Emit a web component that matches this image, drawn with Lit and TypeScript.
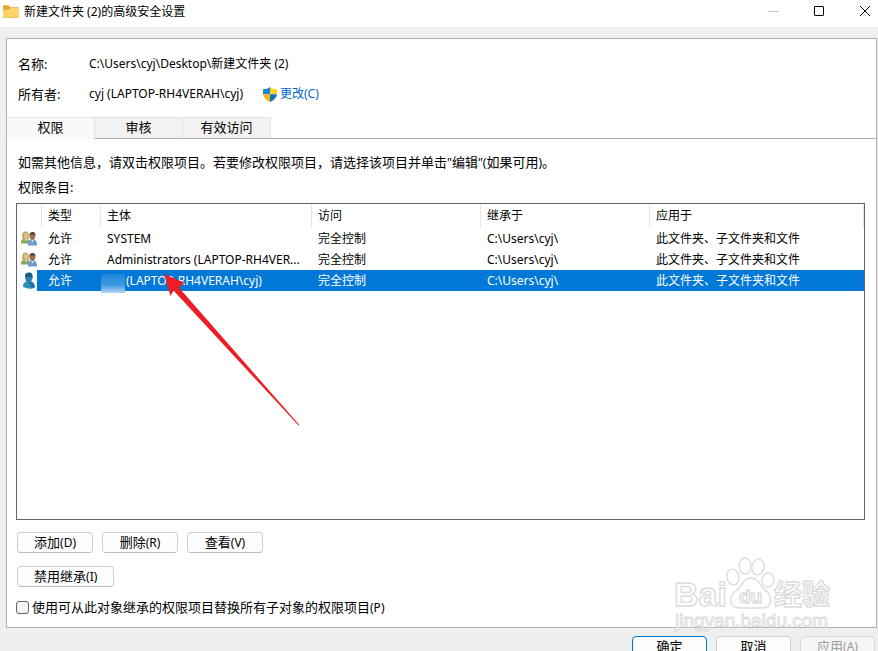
import { LitElement, html, css, svg } from "lit";
import { customElement, state } from "lit/decorators.js";
import { classMap } from "lit/directives/class-map.js";

interface Entry {
  kind: "group" | "user";
  type: string;
  principal: string;
  masked?: boolean;
  access: string;
  inherited: string;
  applies: string;
}

const SCOPE = "此文件夹、子文件夹和文件";
const ENTRIES: Entry[] = [
  { kind: "group", type: "允许", principal: "SYSTEM", access: "完全控制", inherited: "C:\\Users\\cyj\\", applies: SCOPE },
  { kind: "group", type: "允许", principal: "Administrators (LAPTOP-RH4VER...", access: "完全控制", inherited: "C:\\Users\\cyj\\", applies: SCOPE },
  { kind: "user", type: "允许", principal: "(LAPTOP-RH4VERAH\\cyj)", masked: true, access: "完全控制", inherited: "C:\\Users\\cyj\\", applies: SCOPE },
];

const folderIcon = html`<svg width="16" height="14" viewBox="0 0 16 14" aria-hidden="true">
  <path d="M0 1.5Q0 .3 1.2.3H5.4L7.3 2.2H14.6Q16 2.2 16 3.6V11H0Z" fill="#e6a42a"/>
  <path d="M0 4.4H5.6L7.4 3H14.8Q16 3 16 4.2V11.8Q16 13 14.8 13H1.2Q0 13 0 11.8Z" fill="#ffd369"/>
  <path d="M0 11.2V11.8Q0 13 1.2 13H14.8Q16 13 16 11.8V11.2Q16 12.2 14.8 12.2H1.2Q0 12.2 0 11.2Z" fill="#eebb4b"/>
</svg>`;

const shieldIcon = html`<svg width="14" height="15" viewBox="0 0 14 15" aria-hidden="true">
  <path d="M7 0C5 1.7 2.8 2.2 0 2.2V7.3H7Z" fill="#1e86d8"/>
  <path d="M7 0C9 1.7 11.2 2.2 14 2.2V7.3H7Z" fill="#ffd21f"/>
  <path d="M0 7.3H7V15C3 13.2.4 10.6 0 7.3Z" fill="#f7b416"/>
  <path d="M14 7.3H7V15C11 13.2 13.6 10.6 14 7.3Z" fill="#1672bd"/>
</svg>`;

const groupIcon = html`<svg width="16" height="15" viewBox="0 0 16 15" aria-hidden="true">
  <path d="M0 12.6C0 9 1.2 7.6 4.5 7.6S8.6 9 8.8 12.6Z" fill="#86a858"/>
  <path d="M3.6 7.6L5 10.4 6.4 7.4Z" fill="#e9efd9"/>
  <path d="M1.2 7.6C.8 3 1.6.5 4.8.5 7.6.5 8.2 3 7.8 7.4L6 8Z" fill="#bfa468"/>
  <ellipse cx="5" cy="4.6" rx="2" ry="2.9" fill="#e3bd8e"/>
  <path d="M6.8 14.4C6.8 10.4 8 8.6 11.4 8.6S16 10.4 16 14.4Z" fill="#6f9bd1"/>
  <path d="M10 8.6L11.4 11.4 12.9 8.6Z" fill="#dbe8f7"/>
  <ellipse cx="11.4" cy="5.2" rx="2.8" ry="3.8" fill="#a06f48"/>
  <path d="M8.4 5C8.2 2 9.4.9 11.6.9S14.8 2.4 14.4 5.2L13.6 3.4 9.8 3.2Z" fill="#4c4039"/>
</svg>`;

const userIcon = html`<svg width="16" height="18" viewBox="0 0 16 18" aria-hidden="true">
  <path d="M2 14.6C2 10.8 4 9.6 7.6 9.4 11.4 9.4 13.6 11 13.8 15.4 10.4 17.6 5 17 2 14.6Z" fill="#2a8fb8"/>
  <path d="M7 9.6L11 15.8 13.8 15.4C13.6 11.2 11.4 9.4 8.4 9.2Z" fill="#1d6f9b"/>
  <ellipse cx="7.8" cy="5.8" rx="3.7" ry="4.8" fill="#2c83ad"/>
  <path d="M4 5C3.8 2 5.2.6 8 .6S12.2 2.4 11.4 6.4C10.4 3.6 7.4 5 4 5Z" fill="#185d89"/>
</svg>`;

const paw = svg`
  <ellipse cx="59" cy="20" rx="6" ry="8" transform="rotate(-10 59 20)"/>
  <ellipse cx="71" cy="9" rx="6" ry="8"/>
  <ellipse cx="84" cy="10" rx="6" ry="8" transform="rotate(12 84 10)"/>
  <ellipse cx="94" cy="23" rx="6" ry="7" transform="rotate(14 94 23)"/>
  <path d="M77 21C69 21 69 28 63 33 54 39 55 51 66 51 71 51 83 51 88 51 99 51 99 39 91 33 85 28 85 21 77 21Z"/>`;

@customElement("app-root")
export class AppRoot extends LitElement {
  @state() private tab = 0;
  @state() private selected = 2;

  static styles = css`
    :host {
      display: block;
      height: 100vh;
      overflow: hidden;
      background: #efefef;
      color: #000;
      font: 12px/16px "Noto Sans", "Noto Sans CJK SC", sans-serif;
    }
    * { box-sizing: border-box; }
    button, input { font: inherit; color: inherit; margin: 0; }
    svg { display: block; flex: none; }
    .titlebar {
      display: flex;
      align-items: center;
      height: 27px;
      padding: 0 0 4px 3px;
      background: #fff;
    }
    .title { flex: 1; margin: 0 0 0 5px; font: inherit; }
    .winbtns { display: flex; align-self: flex-start; margin-right: -10px; }
    .winbtn {
      display: grid;
      place-items: center;
      width: 46px;
      height: 22px;
      padding: 0;
      border: 0;
      background: none;
    }
    .panel {
      position: relative;
      margin: 11px 1px 0 6px;
      border: 1px solid #b0b0b0;
      background: #fff;
    }
    .facts {
      display: grid;
      grid-template-columns: 71px 1fr;
      row-gap: 14px;
      margin: 0;
      padding: 17px 11px 15px;
    }
    .facts dt, .facts dd { margin: 0; }
    .facts dt { font-size: 13px; }
    .owner { display: flex; gap: 20px; }
    .change { display: flex; gap: 3px; align-items: center; color: #0066cc; text-decoration: none; }
    .tabs { display: flex; height: 22px; border-bottom: 1px solid #b0b0b0; }
    .tab {
      width: 88px;
      height: 21px;
      padding: 0 0 2px;
      border: 1px solid #e3e3e3;
      border-left-width: 0;
      border-bottom: 0;
      background: #f2f2f2;
      font-size: 13px;
      line-height: 16px;
    }
    .tab.on { height: 22px; padding-bottom: 4px; background: #f9f9f9; }
    .body { padding: 15px 11px 10px 9px; }
    .hint { margin: 0 0 8px 2px; font-size: 13px; line-height: 16px; }
    .latin { font-size: 12px; }
    .list {
      position: relative;
      min-height: 317px;
      border: 1px solid #646464;
    }
    .table { width: 100%; table-layout: fixed; border-collapse: separate; border-spacing: 0; }
    .c-icon { width: 25px; }
    .c-type { width: 59px; }
    .c-name { width: 211px; }
    .c-mid { width: 169px; }
    th {
      height: 24px;
      padding: 0 6px;
      border-right: 1px solid #e5e5e5;
      font-weight: normal;
      text-align: left;
    }
    td {
      position: relative;
      height: 21px;
      padding: 0 5px 0 6px;
      white-space: nowrap;
      overflow: hidden;
      text-overflow: ellipsis;
    }
    td.icon { padding: 0 0 0 4px; overflow: visible; }
    .sel td { background: #0078d7; color: #fff; }
    .sel td.icon { background: linear-gradient(to right, #fff 20px, #0078d7 20px); }
    td.masked { padding-left: 25px; overflow: visible; }
    .mask {
      position: absolute;
      left: 0;
      top: 4px;
      width: 24px;
      height: 19px;
      background: linear-gradient(#1c84da, #3f9ae2 60%, #8cc0ee 85%, #b9daf6);
    }
    .arrow { position: absolute; left: 147px; top: 70px; pointer-events: none; }
    .row { display: flex; gap: 9px; margin: 12px 0 0 1px; }
    .row + .row { margin-top: 13px; }
    .btn {
      min-width: 76px;
      height: 21px;
      padding: 0 16px;
      border: 1px solid #d0d0d0;
      border-bottom-color: #bcbcbc;
      border-radius: 4px;
      background: #fdfdfd;
      font-size: 13px;
      line-height: 17px;
      white-space: nowrap;
    }
    .check { display: flex; align-items: center; gap: 3px; margin-top: 11px; font-size: 13px; line-height: 18px; }
    .box {
      appearance: none;
      width: 13px;
      height: 13px;
      border: 1px solid #626262;
      border-radius: 3px;
      background: #f5f5f5;
    }
    .box:checked { background: #0067c0; }
    .footer { display: flex; justify-content: flex-end; gap: 9px; padding: 8px 3px; }
    .footer .btn { width: 75px; min-width: 0; padding: 0; }
    .footer .ok { border-color: #0078d4; }
    .footer .btn:disabled { color: #9d9d9d; border-color: #dcdcdc; background: #f5f5f5; }
    .mark {
      position: absolute;
      right: 40px;
      bottom: -6px;
      pointer-events: none;
      fill: #fff;
      stroke: #dcdcdc;
      stroke-width: 1.4px;
      font-family: "Liberation Sans", "Noto Sans CJK SC", sans-serif;
    }
    .m-big { font-size: 34px; font-weight: bold; }
    .m-du { font-size: 19px; font-weight: bold; }
    .m-cjk { font-size: 28px; font-weight: bold; }
    .m-url { font-size: 19px; stroke-width: 1px; }
  `;

  private button(label: string, key: string) {
    return html`<button class="btn">${label}<span class="latin">(${key})</span></button>`;
  }

  render() {
    return html`
      <header class="titlebar">
        ${folderIcon}
        <h1 class="title">新建文件夹 (2)的高级安全设置</h1>
        <div class="winbtns">
          <button class="winbtn" aria-label="最小化" disabled>
            <svg width="10" height="10" viewBox="0 0 10 10"><path d="M0 5.5H10" stroke="#c4c4c4"/></svg>
          </button>
          <button class="winbtn" aria-label="最大化">
            <svg width="10" height="10" viewBox="0 0 10 10"><rect x=".5" y=".5" width="9" height="9" rx=".5" fill="none" stroke="#000"/></svg>
          </button>
          <button class="winbtn" aria-label="关闭">
            <svg width="10" height="10" viewBox="0 0 10 10"><path d="M0 0L10 10M10 0L0 10" stroke="#000"/></svg>
          </button>
        </div>
      </header>
      <main class="panel">
        <dl class="facts">
          <dt>名称:</dt>
          <dd>C:\\Users\\cyj\\Desktop\\新建文件夹 (2)</dd>
          <dt>所有者:</dt>
          <dd class="owner">
            <span>cyj (LAPTOP-RH4VERAH\\cyj)</span>
            <a class="change" href="#">${shieldIcon}<span>更改(C)</span></a>
          </dd>
        </dl>
        <div class="tabs" role="tablist">
          ${["权限", "审核", "有效访问"].map(
            (name, i) => html`<button
              role="tab"
              aria-selected=${this.tab === i}
              class=${classMap({ tab: true, on: this.tab === i })}
              @click=${() => (this.tab = i)}
            >${name}</button>`
          )}
        </div>
        <div class="body">
          <p class="hint">如需其他信息，请双击权限项目。若要修改权限项目，请选择该项目并单击<span class="latin">"</span>编辑<span class="latin">"(</span>如果可用<span class="latin">)</span>。</p>
          <p class="hint">权限条目:</p>
          <div class="list">
            <table class="table">
              <colgroup>
                <col class="c-icon" /><col class="c-type" /><col class="c-name" />
                <col class="c-mid" /><col class="c-mid" /><col />
              </colgroup>
              <thead>
                <tr><th></th><th>类型</th><th>主体</th><th>访问</th><th>继承于</th><th>应用于</th></tr>
              </thead>
              <tbody>
                ${ENTRIES.map(
                  (e, i) => html`<tr class=${classMap({ sel: this.selected === i })} @click=${() => (this.selected = i)}>
                    <td class="icon">${e.kind === "group" ? groupIcon : userIcon}</td>
                    <td>${e.type}</td>
                    <td class=${classMap({ masked: !!e.masked })}>${e.masked ? html`<span class="mask"></span>` : ""}${e.principal}</td>
                    <td>${e.access}</td>
                    <td>${e.inherited}</td>
                    <td>${e.applies}</td>
                  </tr>`
                )}
              </tbody>
            </table>
            <svg class="arrow" width="138" height="154" viewBox="0 0 138 154" aria-hidden="true">
              <path d="M0 0L20.5 8.8L14.8 13.6L135.4 151L134.6 151.6L9.5 16.6L6.5 22Z" fill="#ee1c24"/>
            </svg>
          </div>
          <div class="row">
            ${this.button("添加", "D")}${this.button("删除", "R")}${this.button("查看", "V")}
          </div>
          <div class="row">${this.button("禁用继承", "I")}</div>
          <label class="check">
            <input class="box" type="checkbox" />
            <span>使用可从此对象继承的权限项目替换所有子对象的权限项目<span class="latin">(P)</span></span>
          </label>
        </div>
        <svg class="mark" width="162" height="76" viewBox="0 0 162 76" aria-hidden="true">
          <text class="m-big" x="0" y="49">Bai</text>
          ${paw}
          <text class="m-du" x="65" y="46">du</text>
          <text class="m-cjk" x="100" y="48">经验</text>
          <text class="m-url" x="1" y="70">jingyan.baidu.com</text>
        </svg>
      </main>
      <footer class="footer">
        <button class="btn ok">确定</button>
        <button class="btn">取消</button>
        <button class="btn" disabled>应用<span class="latin">(A)</span></button>
      </footer>
    `;
  }
}
